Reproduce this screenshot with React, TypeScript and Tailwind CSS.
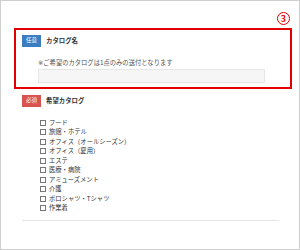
import React from 'react';

const catalogs = [
  'フード',
  '旅館・ホテル',
  'オフィス（オールシーズン）',
  'オフィス（夏用）',
  'エステ',
  '医療・病院',
  'アミューズメント',
  '介護',
  'ポロシャツ・Tシャツ',
  '作業着',
];

const Badge: React.FC<{ label: string; tone: 'blue' | 'red' }> = ({ label, tone }) => (
  <span
    className={`flex items-center justify-center w-[19px] h-[12px] text-[5.5px] leading-none text-white ${
      tone === 'blue' ? 'bg-[#3c7dc2]' : 'bg-[#d9534f]'
    }`}
  >
    {label}
  </span>
);

const App: React.FC = () => {
  return (
    <div
      className="w-[300px] h-[250px] border border-[#cfcfcf] bg-white text-[#333]"
      style={{ fontFamily: '"Noto Sans CJK JP", "Liberation Sans", sans-serif' }}
    >
      {/* annotation number */}
      <div className="flex justify-end pt-[11px] pr-[9px] h-[27px]">
        <span className="flex items-center justify-center w-[13px] h-[13px] rounded-full border-[1.5px] border-[#e20000] text-[#e20000] text-[9px] font-bold leading-none">
          3
        </span>
      </div>

      {/* optional: catalog name (highlighted) */}
      <div className="ml-[13px] mr-[7px] h-[61px] border-2 border-[#e20000] pt-[5px] pl-[6px]">
        <div className="flex items-center gap-[5px]">
          <Badge label="任意" tone="blue" />
          <span className="text-[6.4px] font-bold">カタログ名</span>
        </div>
        <div className="ml-[16px] mt-[12px]">
          <p className="text-[6.3px] leading-[8px] text-[#555]">
            <span className="text-[#555] font-['DejaVu_Sans',sans-serif]">※</span>ご希望のカタログは1点のみの送付となります
          </p>
          <div className="mt-[2px] w-[227px] h-[14px] bg-[#f6f6f6] border border-[#e6e6e6]" />
        </div>
      </div>

      {/* required: catalog choice */}
      <div className="pl-[21px] mt-[6px]">
        <div className="flex items-center gap-[5px]">
          <Badge label="必須" tone="red" />
          <span className="text-[6.4px] font-bold">希望カタログ</span>
        </div>
        <ul className="mt-[11px] pl-[18px]">
          {catalogs.map((c) => (
            <li key={c} className="flex items-center gap-[3px] h-[9.5px] text-[6.3px] leading-none text-[#333]">
              <span className="w-[6px] h-[6px] border border-[#777] bg-white" />
              <span>{c}</span>
            </li>
          ))}
        </ul>
        <div className="mt-[7px] w-[257px] h-px bg-[#e5e5e5]" />
      </div>
    </div>
  );
};

export default App;
